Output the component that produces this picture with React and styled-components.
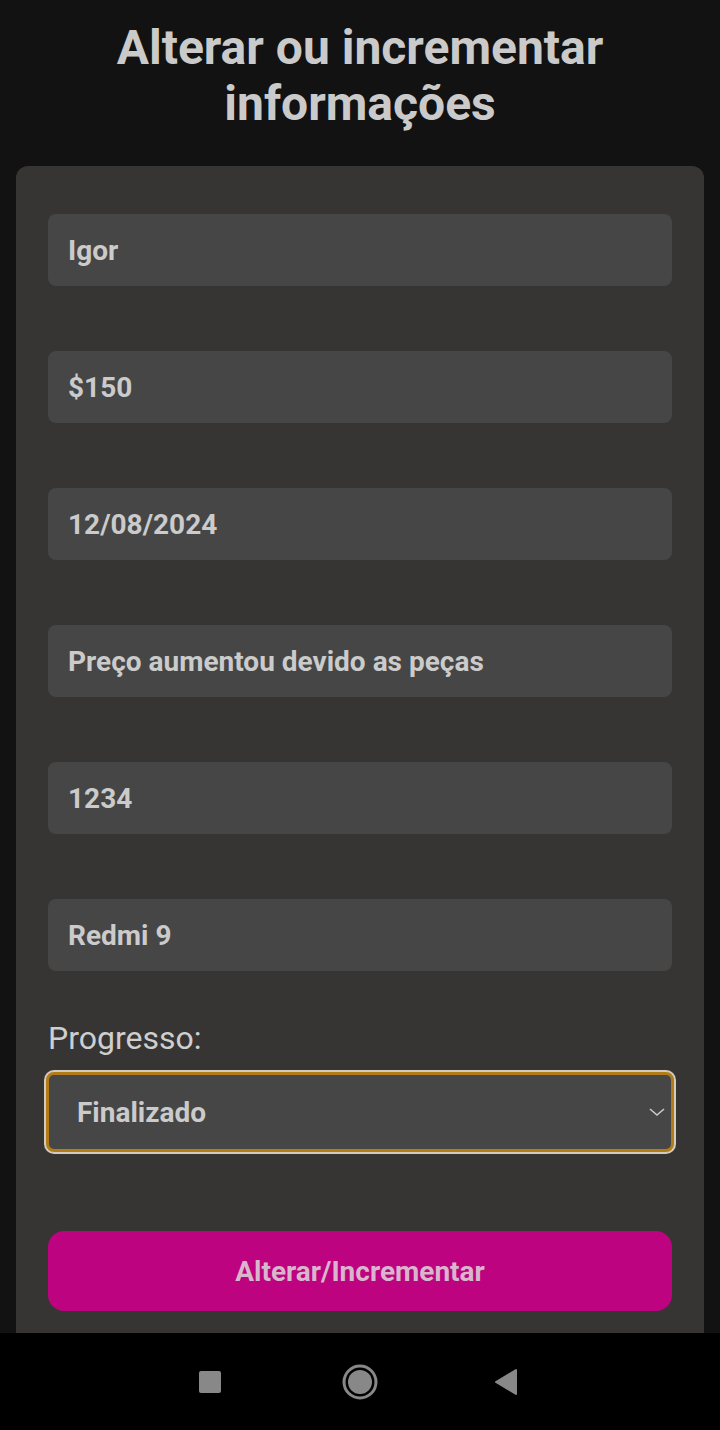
import React from 'react';
import styled, { createGlobalStyle } from 'styled-components';

const GlobalStyle = createGlobalStyle`
  * {
    box-sizing: border-box;
  }
  body {
    margin: 0;
    background: #121212;
    font-family: Roboto, "Liberation Sans", sans-serif;
  }
`;

const Screen = styled.div`
  display: flex;
  flex-direction: column;
  height: 1430px;
  background: #121212;
  overflow: hidden;
`;

const Title = styled.h1`
  margin: 0;
  padding: 20px 16px 0;
  height: 166px;
  text-align: center;
  font-size: 48px;
  line-height: 56px;
  font-weight: 700;
  color: #cacaca;
`;

const Card = styled.form`
  flex: 1;
  margin: 0 16px;
  padding: 48px 32px 0;
  background: #373534;
  border-radius: 12px 12px 0 0;
  display: flex;
  flex-direction: column;
  overflow: hidden;
`;

const Field = styled.input`
  height: 72px;
  margin-bottom: 65px;
  padding: 0 20px;
  border: none;
  border-radius: 8px;
  background: #464646;
  color: #cbcbcb;
  font-family: inherit;
  font-size: 28px;
  font-weight: 700;
  outline: none;
`;

const Label = styled.label`
  font-size: 32px;
  line-height: 36px;
  color: #cfcfcf;
  margin-top: -16px;
  margin-bottom: 16px;
`;

const SelectWrap = styled.div`
  position: relative;
  margin: 0 -2px;
`;

const Select = styled.select`
  appearance: none;
  width: 100%;
  height: 80px;
  padding: 0 28px;
  border: 3px solid #b27c18;
  border-radius: 8px;
  box-shadow: 0 0 0 2px #d3cbbd;
  background: #464646;
  color: #cbcbcb;
  font-family: inherit;
  font-size: 28px;
  font-weight: 700;
  outline: none;
`;

const Chevron = styled.svg`
  position: absolute;
  right: 8px;
  top: 50%;
  transform: translateY(-50%);
  width: 18px;
  height: 12px;
  pointer-events: none;
`;

const SubmitButton = styled.button`
  margin-top: 79px;
  height: 80px;
  border: none;
  border-radius: 16px;
  background: #bd037f;
  color: #d9b6cd;
  font-family: inherit;
  font-size: 28px;
  font-weight: 700;
`;

const NavBar = styled.div`
  height: 97px;
  background: #000;
  display: flex;
  align-items: center;
  justify-content: center;
  gap: 114px;
`;

const NavIcon = styled.svg`
  width: 36px;
  height: 36px;
`;

const fields = ['Igor', '$150', '12/08/2024', 'Preço aumentou devido as peças', '1234', 'Redmi 9'];

export default function App() {
  return (
    <Screen>
      <GlobalStyle />
      <Title>Alterar ou incrementar informações</Title>
      <Card onSubmit={e => e.preventDefault()}>
        {fields.map(v => (
          <Field key={v} defaultValue={v} />
        ))}
        <Label htmlFor="progresso">Progresso:</Label>
        <SelectWrap>
          <Select id="progresso" defaultValue="Finalizado">
            <option>Pendente</option>
            <option>Em andamento</option>
            <option>Finalizado</option>
          </Select>
          <Chevron viewBox="0 0 18 12">
            <path d="M2 3 L9 9 L16 3" fill="none" stroke="#c9c9c9" strokeWidth="1.6" />
          </Chevron>
        </SelectWrap>
        <SubmitButton type="submit">Alterar/Incrementar</SubmitButton>
      </Card>
      <NavBar>
        <NavIcon viewBox="0 0 36 36">
          <rect x="7" y="7" width="22" height="22" rx="2" fill="#888" />
        </NavIcon>
        <NavIcon viewBox="0 0 36 36">
          <circle cx="18" cy="18" r="16" fill="none" stroke="#888" strokeWidth="3" />
          <circle cx="18" cy="18" r="12" fill="#888" />
        </NavIcon>
        <NavIcon viewBox="0 0 36 36">
          <path d="M4 18 L24 6 L24 30 Z" fill="#888" strokeLinejoin="round" stroke="#888" strokeWidth="2" />
        </NavIcon>
      </NavBar>
    </Screen>
  );
}
